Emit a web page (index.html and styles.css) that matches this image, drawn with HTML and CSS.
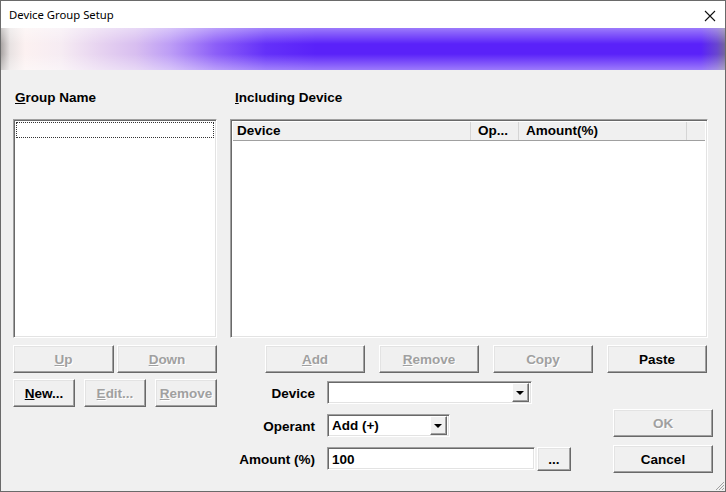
FILE: index.html
```html
<!DOCTYPE html>
<html lang="en">
<head>
    <meta charset="UTF-8">
    <title>Device Group Setup</title>
    <link rel="stylesheet" href="styles.css">
</head>
<body>

    <div class="window">
        <div class="titlebar">
            <span class="title">Device Group Setup</span>
            <svg class="close" width="12" height="12" viewBox="0 0 12 12">
                <path d="M1 1 L11 11 M11 1 L1 11" stroke="#111" stroke-width="1.1" fill="none"/>
            </svg>
        </div>
        <div class="banner"></div>

        <div class="content">
            <!-- left side: groups -->
            <div class="group-col">
                <div class="caption caption-left"><u>G</u>roup Name</div>
                <div class="listbox sunken">
                    <div class="focus-row"></div>
                </div>
                <div class="btn-row updown">
                    <button class="btn w101" disabled><u>U</u>p</button>
                    <button class="btn w100" disabled><u>D</u>own</button>
                </div>
                <div class="btn-row edit-row">
                    <button class="btn w62"><u>N</u>ew...</button>
                    <button class="btn w62" disabled><u>E</u>dit...</button>
                    <button class="btn w62" disabled><u>R</u>emove</button>
                </div>
            </div>

            <!-- right side: devices in group -->
            <div class="device-col">
                <div class="caption caption-right"><u>I</u>ncluding Device</div>
                <div class="listview sunken">
                    <div class="lv-header">
                        <div class="lv-col col-device">Device</div>
                        <div class="lv-col col-op">Op...</div>
                        <div class="lv-col col-amount">Amount(%)</div>
                        <div class="lv-col col-rest"></div>
                    </div>
                </div>
                <div class="btn-row device-btns">
                    <button class="btn w100" disabled><u>A</u>dd</button>
                    <button class="btn w100" disabled><u>R</u>emove</button>
                    <button class="btn w100" disabled>Copy</button>
                    <button class="btn w100">Paste</button>
                </div>

                <div class="lower">
                    <div class="form">
                        <div class="form-row">
                            <label class="form-label">Device</label>
                            <div class="combo sunken combo-device">
                                <span class="combo-text"></span>
                                <span class="drop"><i></i></span>
                            </div>
                        </div>
                        <div class="form-row">
                            <label class="form-label">Operant</label>
                            <div class="combo sunken combo-op">
                                <span class="combo-text">Add (+)</span>
                                <span class="drop"><i></i></span>
                            </div>
                        </div>
                        <div class="form-row">
                            <label class="form-label">Amount (%)</label>
                            <div class="field sunken">100</div>
                            <button class="btn dots">...</button>
                        </div>
                    </div>
                    <div class="dlg-btns">
                        <button class="btn w100" disabled>OK</button>
                        <button class="btn w100">Cancel</button>
                    </div>
                </div>
            </div>
        </div>

        <svg class="grip" width="11" height="11" viewBox="0 0 11 11">
            <path d="M10 2 L2 10 M10 5 L5 10 M10 8 L8 10" stroke="#a0a0a0" stroke-width="1" fill="none"/>
        </svg>
    </div>

</body>
</html>
```

FILE: styles.css
```css
* {
    margin: 0;
    padding: 0;
    box-sizing: border-box;
}

body {
    background-color: #f0f0f0;
    font-family: 'Liberation Sans', Arial, sans-serif;
    font-size: 13.5px;
    font-weight: bold;
    color: #000;
}

.window {
    position: relative;
    width: 726px;
    height: 492px;
    border: 1px solid #6a6a6a;
    background-color: #f0f0f0;
    overflow: hidden;
}

/* title bar */
.titlebar {
    height: 27px;
    background-color: #fff;
    display: flex;
    align-items: center;
    justify-content: space-between;
    padding: 0 9px 0 8px;
}

.title {
    font-family: 'Noto Sans', sans-serif;
    font-weight: normal;
    font-size: 11.3px;
    color: #000;
}

.close {
    display: block;
    margin-top: 2px;
}

.banner {
    height: 42px;
    background:
        linear-gradient(to bottom, rgba(255, 255, 255, 0.4), rgba(255, 255, 255, 0) 38%, rgba(255, 255, 255, 0) 62%, rgba(255, 255, 255, 0.4)),
        linear-gradient(to right, #aaa5a4 0, #e8e2e2 9px, #fcf1f1 24px, #f6ecf3 60px, #e6d2f0 100px, #d8bef0 135px, #bc9cf6 170px, #8c5ef8 215px, #6430f9 265px, #5a22f9 315px, #5a22f9 700px, #6845d0 716px, #75689a 725px);
}

/* main area */
.content {
    display: flex;
    gap: 13px;
    padding: 20px 17px 0 12px;
}

.caption {
    line-height: 15px;
    margin-bottom: 14px;
}

.caption-left {
    padding-left: 2px;
}

.caption-right {
    padding-left: 5px;
}

.sunken {
    background-color: #fff;
    border-top: 1px solid #a0a0a0;
    border-left: 1px solid #a0a0a0;
    border-bottom: 1px solid #fff;
    border-right: 1px solid #fff;
    box-shadow: inset 1px 1px #696969, inset -1px -1px #e3e3e3;
}

.group-col {
    width: 204px;
}

.listbox {
    height: 219px;
    padding: 2px;
}

.focus-row {
    height: 16px;
    border: 1px dotted #333;
}

.btn {
    font-family: inherit;
    font-size: 13.5px;
    font-weight: bold;
    color: #000;
    height: 28px;
    background-color: #f0f0f0;
    border: 1px solid;
    border-color: #fff #696969 #696969 #fff;
    box-shadow: inset -1px -1px #a0a0a0, inset 1px 1px #e3e3e3;
    cursor: pointer;
}

.btn:disabled {
    color: #a0a0a0;
    text-shadow: 1px 1px #fff;
    cursor: default;
}

.w101 { width: 101px; }
.w100 { width: 100px; }
.w62 { width: 62px; }

.btn-row {
    display: flex;
}

.updown {
    margin-top: 7px;
    gap: 3px;
}

.edit-row {
    margin-top: 6px;
    justify-content: space-between;
}

/* device list */
.device-col {
    width: 478px;
}

.listview {
    height: 219px;
    padding: 2px;
}

.lv-header {
    display: flex;
    height: 19px;
    background-color: #f0f0f0;
    border-bottom: 1px solid #a0a0a0;
}

.lv-col {
    line-height: 18px;
    padding-left: 4px;
    border-right: 1px solid #d5d5d5;
}

.col-device { width: 238px; }
.col-op { width: 48px; padding-left: 7px; }
.col-amount { width: 168px; padding-left: 7px; }
.col-rest { flex: 1; border-right: none; }

.device-btns {
    margin-top: 7px;
    padding-left: 35px;
    gap: 14px;
}

/* bottom form */
.lower {
    display: flex;
    justify-content: space-between;
    margin-top: 8px;
    margin-right: -5px;
}

.form {
    display: flex;
    flex-direction: column;
    gap: 10px;
}

.form-row {
    display: flex;
    align-items: center;
    height: 23px;
}

.form-label {
    width: 85px;
    text-align: right;
    margin-right: 12px;
    padding-top: 2px;
}

.combo {
    display: flex;
    align-items: center;
    justify-content: space-between;
    height: 23px;
    padding: 2px;
}

.combo-device { width: 205px; }
.combo-op { width: 123px; }

.combo-text {
    padding-left: 2px;
}

.drop {
    width: 17px;
    height: 19px;
    background-color: #f0f0f0;
    border: 1px solid;
    border-color: #fff #696969 #696969 #fff;
    box-shadow: inset -1px -1px #a0a0a0;
    display: flex;
    align-items: center;
    justify-content: center;
}

.drop i {
    width: 0;
    height: 0;
    border-left: 4px solid transparent;
    border-right: 4px solid transparent;
    border-top: 4px solid #000;
    margin-left: -1px;
}

.field {
    width: 208px;
    height: 23px;
    line-height: 19px;
    padding: 2px 4px;
}

.dots {
    width: 34px;
    height: 24px;
    margin-left: 2px;
    margin-top: 1px;
}

.dlg-btns {
    display: flex;
    flex-direction: column;
    gap: 8px;
    margin-top: 28px;
}

.grip {
    position: absolute;
    right: 0;
    bottom: 0;
}
```
